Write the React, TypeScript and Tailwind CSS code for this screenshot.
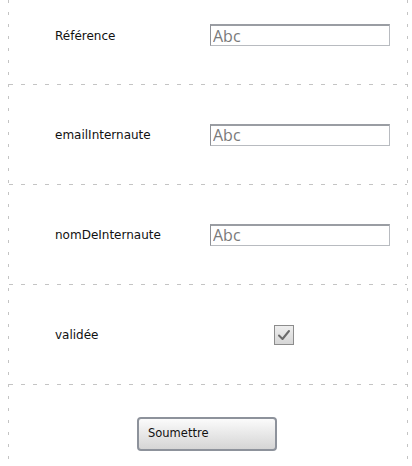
import React from 'react';

const labelFont = "font-['DejaVu_Sans',sans-serif]";

// dotted guide lines between the form rows
const HRule = () => (
  <div className="h-px w-full bg-[repeating-linear-gradient(90deg,#c4c4c4_0px,#c4c4c4_4px,transparent_4px,transparent_12px)]" />
);

const VRule = () => (
  <div className="w-px self-stretch bg-[repeating-linear-gradient(180deg,#c4c4c4_0px,#c4c4c4_3px,transparent_3px,transparent_12px)]" />
);

const Field = () => (
  <input
    type="text"
    placeholder="Abc"
    className="h-[22px] w-[180px] border border-t-2 border-[#b8bbc0] border-t-[#9a9da3] border-l-[#8e9197] bg-white px-[2px] font-['Open_Sans',sans-serif] text-[16px] text-[#333] outline-none placeholder:text-[#7a7a7a]"
  />
);

const TextRow: React.FC<{ label: string }> = ({ label }) => (
  <div className="flex h-[99px] items-center">
    <span className={`w-[201px] pl-[46px] text-[12px] text-[#111] ${labelFont}`}>{label}</span>
    <Field />
  </div>
);

export default function App() {
  return (
    <div className="min-h-[466px] w-full bg-white">
      <div className="ml-[8px] flex w-[400px]">
        <VRule />
        <div className="flex flex-1 flex-col">
          <div className="flex h-[84px] items-start pt-[24px]">
            <span className={`w-[201px] pl-[46px] pt-[3px] text-[12px] text-[#111] ${labelFont}`}>Référence</span>
            <Field />
          </div>
          <HRule />
          <TextRow label="emailInternaute" />
          <HRule />
          <TextRow label="nomDeInternaute" />
          <HRule />
          <div className="flex h-[99px] items-center">
            <span className={`w-[265px] pl-[46px] text-[12px] text-[#111] ${labelFont}`}>validée</span>
            <span className="flex h-[20px] w-[20px] items-center justify-center border border-[#8c8c8c] bg-[linear-gradient(#eeeeee,#d6d6d6)]">
              <svg width="14" height="12" viewBox="0 0 14 12" fill="none">
                <path d="M2 6.5 L5.5 10 L12 2" stroke="#6a6a6a" strokeWidth="2" strokeLinecap="round" strokeLinejoin="round" />
              </svg>
            </span>
          </div>
          <HRule />
          <div className="flex h-[81px] items-start pl-[128px] pt-[32px]">
            <button
              type="button"
              className={`h-[34px] w-[140px] rounded-[4px] border-2 border-[#8d929b] bg-[linear-gradient(#fbfbfb,#d5d5d5)] pl-[9px] text-left text-[11.5px] text-[#111] ${labelFont}`}
            >
              Soumettre
            </button>
          </div>
        </div>
        <VRule />
      </div>
    </div>
  );
}
